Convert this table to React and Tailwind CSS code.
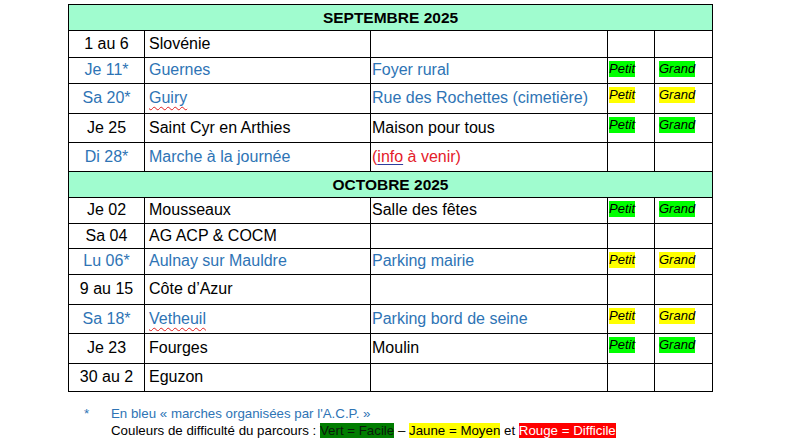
const blue = 'text-[#2e74b5]';

const septembre = [
  { date: '1 au 6', lieu: 'Slovénie', rdv: '', h: 'h-[27px]' },
  { date: 'Je 11*', lieu: 'Guernes', rdv: 'Foyer rural', acp: true, level: 'vert', h: 'h-[26px]' },
  { date: 'Sa 20*', lieu: 'Guiry', squiggle: true, rdv: 'Rue des Rochettes (cimetière)', acp: true, level: 'jaune', h: 'h-[30px]' },
  { date: 'Je 25', lieu: 'Saint Cyr en Arthies', rdv: 'Maison pour tous', level: 'vert', h: 'h-[29px]' },
  { date: 'Di 28*', lieu: 'Marche à la journée', info: true, acp: true, h: 'h-[29px]' },
];

const octobre = [
  { date: 'Je 02', lieu: 'Mousseaux', rdv: 'Salle des fêtes', level: 'vert', h: 'h-[26px]' },
  { date: 'Sa 04', lieu: 'AG ACP & COCM', rdv: '', h: 'h-[25px]' },
  { date: 'Lu 06*', lieu: 'Aulnay sur Mauldre', rdv: 'Parking mairie', acp: true, level: 'jaune', h: 'h-[26px]' },
  { date: '9 au 15', lieu: 'Côte d’Azur', rdv: '', h: 'h-[30px]' },
  { date: 'Sa 18*', lieu: 'Vetheuil', squiggle: true, rdv: 'Parking bord de seine', acp: true, level: 'jaune', h: 'h-[29px]' },
  { date: 'Je 23', lieu: 'Fourges', rdv: 'Moulin', level: 'vert', h: 'h-[30px]' },
  { date: '30 au 2', lieu: 'Eguzon', rdv: '', h: 'h-[28px]' },
];

function Tag({ children, level }) {
  const bg = level === 'vert' ? 'bg-[#00ff00]' : 'bg-[#ffff00]';
  return <span className={`inline-block italic text-[13px] leading-[16px] text-black ${bg}`}>{children}</span>;
}

function MonthHeader({ label }) {
  return (
    <tr className="h-[26px]">
      <td colSpan={5} className="border border-black bg-[#a0fccf] text-center font-bold text-[15.5px] text-black">
        {label}
      </td>
    </tr>
  );
}

function Row({ r }) {
  const color = r.acp ? blue : 'text-black';
  return (
    <tr className={r.h}>
      <td className={`border border-black text-center align-middle pb-[1px] ${color}`}>{r.date}</td>
      <td className={`border border-black pl-[4px] align-middle pb-[1px] ${color}`}>
        {r.squiggle ? (
          <span className="underline decoration-wavy decoration-[#e02020] decoration-1 underline-offset-[3px]">{r.lieu}</span>
        ) : (
          r.lieu
        )}
      </td>
      <td className={`border border-black pl-[1px] align-middle pb-[1px] whitespace-nowrap ${color}`}>
        {r.info ? (
          <span className="text-[#e4202a]">
            (<span className="underline decoration-[#2e3e9e] underline-offset-[2px]">info</span> à venir)
          </span>
        ) : (
          r.rdv
        )}
      </td>
      <td className="border border-black align-top pl-[1px] pt-[1px]">
        {r.level ? <Tag level={r.level}>Petit</Tag> : null}
      </td>
      <td className="border border-black align-top pl-[4px] pt-[1px]">
        {r.level ? <Tag level={r.level}>Grand</Tag> : null}
      </td>
    </tr>
  );
}

export default function App() {
  return (
    <div className="w-[786px] h-[445px] bg-white overflow-hidden pt-[4px] font-['Liberation_Sans',Arial,sans-serif] text-[16px] leading-[18px]">
      <table className="ml-[68px] w-[644px] table-fixed border-collapse">
        <colgroup>
          <col className="w-[76px]" />
          <col className="w-[226px]" />
          <col className="w-[237px]" />
          <col className="w-[47px]" />
          <col className="w-[58px]" />
        </colgroup>
        <tbody>
          <MonthHeader label="SEPTEMBRE 2025" />
          {septembre.map((r) => (
            <Row key={r.date} r={r} />
          ))}
          <MonthHeader label="OCTOBRE 2025" />
          {octobre.map((r) => (
            <Row key={r.date} r={r} />
          ))}
        </tbody>
      </table>

      <div className="mt-[13px] text-[13.3px] leading-[17px]">
        <div className={`flex ${blue}`}>
          <span className="w-[111px] pl-[84px]">*</span>
          <span>En bleu « marches organisées par l'A.C.P. »</span>
        </div>
        <div className="pl-[111px] text-black">
          Couleurs de difficulté du parcours :{' '}
          <span className="bg-[#007d00] text-[#0a1a0a]">Vert = Facile</span> –{' '}
          <span className="bg-[#ffff00]">Jaune = Moyen</span> et{' '}
          <span className="bg-[#ff0000] text-white">Rouge = Difficile</span>
        </div>
      </div>
    </div>
  );
}
